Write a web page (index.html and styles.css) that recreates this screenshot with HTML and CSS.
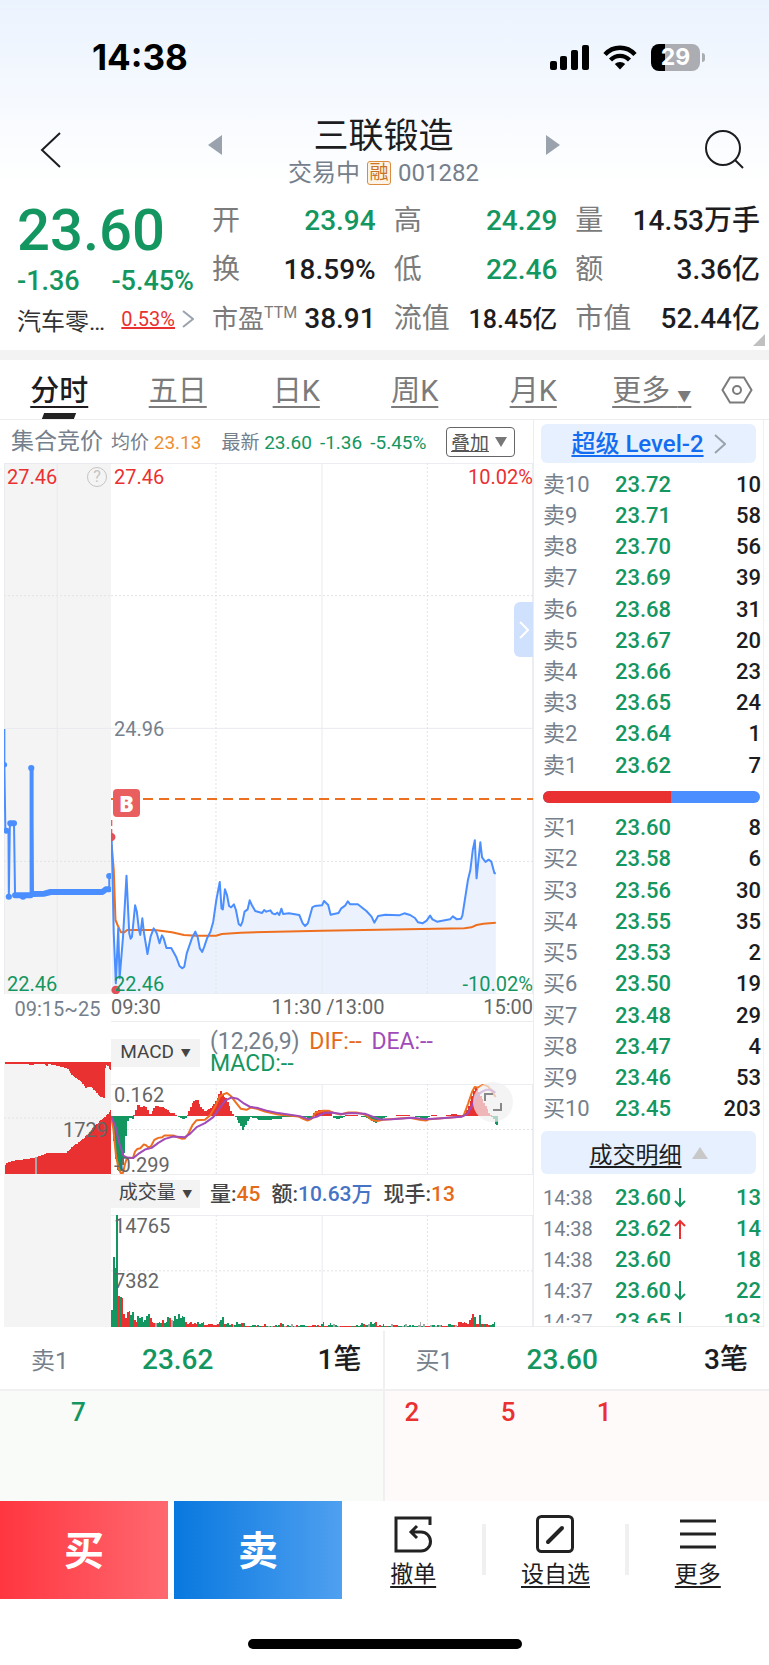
FILE: index.html
```html
<!DOCTYPE html>
<html lang="zh-CN">
<head>
  <meta charset="UTF-8">
  <meta name="viewport" content="width=device-width, initial-scale=1.0">
  <title>三联锻造 001282</title>
  <link rel="stylesheet" href="styles.css">
</head>
<body>
  <!-- Status bar and title -->
  <header class="top">
    <div class="status-bar">
      <span class="clock">14:38</span>
      <div class="status-icons">
        <svg width="39" height="26" viewBox="0 0 39 26">
          <rect x="0" y="17" width="7" height="9" rx="2"/>
          <rect x="10" y="12" width="7" height="14" rx="2"/>
          <rect x="21" y="6" width="7" height="20" rx="2"/>
          <rect x="32" y="1" width="7" height="25" rx="2"/>
        </svg>
        <svg width="34" height="26" viewBox="0 0 34 26" fill="none" stroke="#000" stroke-width="4.4">
          <path d="M2 10.500C10 1.500 24 1.500 32 10.500"/>
          <path d="M7.500 16C13 10.500 21 10.500 26.500 16"/>
          <path d="M17 25.500L11.800 20C14.500 17.300 19.500 17.300 22.200 20Z" fill="#000" stroke="none"/>
        </svg>
        <div class="battery"><span>29</span></div>
      </div>
    </div>
    <nav class="title-bar">
      <button class="icon-button back" aria-label="返回">
        <svg width="22" height="38" viewBox="0 0 22 38"><path d="M20 2L2 19L20 36"/></svg>
      </button>
      <div class="switcher">
        <button class="icon-button arrow" aria-label="上一只">
          <svg width="14" height="20" viewBox="0 0 14 20"><path d="M14 0V20L0 10Z"/></svg>
        </button>
        <div class="title">
          <h1>三联锻造</h1>
          <p>交易中 <span class="tag">融</span> 001282</p>
        </div>
        <button class="icon-button arrow" aria-label="下一只">
          <svg width="14" height="20" viewBox="0 0 14 20"><path d="M0 0V20L14 10Z"/></svg>
        </button>
      </div>
      <button class="icon-button search" aria-label="搜索">
        <svg width="40" height="40" viewBox="0 0 40 40"><circle cx="18" cy="18" r="17"/><path d="M30 30L38 38"/></svg>
      </button>
    </nav>
  </header>

  <!-- Quote -->
  <section class="quote">
    <div class="quote-main">
      <div class="price">23.60</div>
      <div class="change"><span>-1.36</span><span>-5.45%</span></div>
      <div class="sector">
        <span>汽车零…</span>
        <a href="#">0.53%</a>
        <svg width="12" height="18" viewBox="0 0 12 18"><path d="M1 1L11 9L1 17"/></svg>
      </div>
    </div>
    <dl class="stats">
      <div><dt>开</dt><dd class="green">23.94</dd></div>
      <div><dt>换</dt><dd>18.59%</dd></div>
      <div><dt class="small">市盈<sup>TTM</sup></dt><dd>38.91</dd></div>
    </dl>
    <dl class="stats">
      <div><dt>高</dt><dd class="green">24.29</dd></div>
      <div><dt>低</dt><dd class="green">22.46</dd></div>
      <div><dt>流值</dt><dd class="small">18.45亿</dd></div>
    </dl>
    <dl class="stats">
      <div><dt>量</dt><dd>14.53万手</dd></div>
      <div><dt>额</dt><dd>3.36亿</dd></div>
      <div><dt>市值</dt><dd>52.44亿</dd></div>
    </dl>
    <i class="corner"></i>
  </section>

  <!-- Period tabs -->
  <nav class="tabs">
    <a href="#" class="active">分时</a>
    <a href="#">五日</a>
    <a href="#">日K</a>
    <a href="#">周K</a>
    <a href="#">月K</a>
    <a href="#">更多 <small>▼</small></a>
    <button class="icon-button settings" aria-label="设置">
      <svg width="32" height="28" viewBox="0 0 32 28"><path d="M9 1.500H23L30.500 14L23 26.500H9L1.500 14Z"/><circle cx="16" cy="14" r="4"/></svg>
    </button>
  </nav>

  <main class="market">
    <div class="charts">
      <div class="legend">
        <span class="legend-title">集合竞价</span>
        <span>均价 <b class="amber">23.13</b></span>
        <span class="latest">最新 <b class="green">23.60</b></span>
        <b class="green">-1.36</b>
        <b class="green">-5.45%</b>
        <button class="overlay-button"><u>叠加</u><i></i></button>
      </div>

      <!-- Call auction -->
      <div class="auction">
        <div class="panel price-panel grey">
          <svg viewBox="0 0 310 1593" preserveAspectRatio="none">
            <g transform="translate(-13 771)">
              <path class="grid" d="M14 -771V822M167 -771V822M13 -770H323M13 25H323"/>
              <path class="grid dotted" d="M13 -373H323M13 424H323"/>
              <path class="line blue" d="M14 27V134L17 330L26 334L27 530L30 310H42L45 526H92V144L97 523L140 520L148 516H300L310 508H318V468H323"/>
              <path class="line blue thick" d="M30 310H42M45 526H88L100 522H135L148 516H300L308 508H318M93 146V520"/>
              <path class="line blue fat" d="M45 526H90M97 522L130 521L148 516H298L308 508H316M31 310H42"/>
              <g class="blue-dots">
                <circle cx="14" cy="134" r="8"/><circle cx="20" cy="332" r="9"/><circle cx="27" cy="530" r="9"/>
                <circle cx="92" cy="144" r="9"/><circle cx="318" cy="468" r="9"/><circle cx="68" cy="530" r="9"/>
              </g>
            </g>
          </svg>
          <span class="label top-left red">27.46</span>
          <span class="label bottom-left green">22.46</span>
          <span class="help">?</span>
        </div>
        <div class="auction-time">09:15~25</div>
        <div class="panel auction-volume grey">
          <svg viewBox="13 157 310 336" preserveAspectRatio="none">
            <path class="grid dotted" d="M13 325H323"/>
            <g id="auction-bars"></g>
          </svg>
          <span class="label volume-mark">1729</span>
        </div>
        <div class="auction-rest grey"></div>
      </div>

      <!-- Trading session -->
      <div class="session">
        <div class="panel price-panel">
          <svg viewBox="0 0 1226 1593" preserveAspectRatio="none">
            <g transform="translate(-323 771)">
              <path class="area" d="M325 380L337 805L344 625L348 790L358 650L368 467L376 640L380 656L384 650L393 556L398 575L404 628L408 645L414 595L419 640L429 702L438 650L447 625L456 640L464 670L471 646L476 655L484 684H498L512 710L522 738L530 745L536 740L543 700L558 655L568 635L575 652L581 685L588 696L594 680L602 655L612 635L620 605L629 540L639 486L644 565L648 568L654 508L660 525L666 558L672 562L680 553L686 570L694 612L700 617L705 605L711 575L720 568L726 541L732 555L742 573L762 579L768 570L774 575L786 571L792 580L800 583L806 578L812 585L818 566L823 582L840 580L870 585L880 610L887 618L895 610L908 562L915 558L936 556L942 543L954 555L961 584L984 579L992 565L1004 556L1011 544L1018 553L1040 553L1065 573L1080 590L1088 608L1099 588L1120 584L1160 586L1175 580L1192 585L1206 594L1215 607L1228 610L1240 602L1250 587L1257 598L1270 605L1308 598L1316 589L1328 598L1340 596L1344 586L1360 480L1367 450L1374 390L1380 361L1385 475L1396 367L1401 412L1411 426L1420 419L1428 425L1437 460H1441V822H325Z"/>
              <path class="grid" d="M323 -770H1549M323 25H1549M323 822H1549M936 -771V822M1548 -771V822"/>
              <path class="grid dotted" d="M323 -373H1549M323 424H1549M628 -771V822M1242 -771V822"/>
              <path class="line orange" d="M325 375L331 450L336 600L342 615L352 637H362L370 630H450L500 637L535 645L570 647H628L645 642L700 638L936 632L1100 629L1350 625L1370 622L1385 615L1405 611L1441 608"/>
              <path class="line blue" d="M325 360L331 640L337 790L344 625L348 775L358 650L368 467L376 640L380 656L384 650L393 556L398 575L404 628L408 645L414 595L419 640L429 702L438 650L447 625L456 640L464 670L471 646L476 655L484 684H498L512 710L522 738L530 745L536 740L543 700L558 655L568 635L575 652L581 685L588 696L594 680L602 655L612 635L620 605L629 540L639 486L644 565L648 568L654 508L660 525L666 558L672 562L680 553L686 570L694 612L700 617L705 605L711 575L720 568L726 541L732 555L742 573L762 579L768 570L774 575L786 571L792 580L800 583L806 578L812 585L818 566L823 582L840 580L870 585L880 610L887 618L895 610L908 562L915 558L936 556L942 543L954 555L961 584L984 579L992 565L1004 556L1011 544L1018 553L1040 553L1065 573L1080 590L1088 608L1099 588L1120 584L1160 586L1175 580L1192 585L1206 594L1215 607L1228 610L1240 602L1250 587L1257 598L1270 605L1308 598L1316 589L1328 598L1340 596L1344 586L1360 480L1367 450L1374 390L1380 361L1385 475L1396 367L1401 412L1411 426L1420 419L1428 425L1437 460H1441"/>
              <path class="line orange cost" d="M323 237H1549"/>
              <path class="line trade" d="M324 300V345"/>
              <circle class="trade-dot" cx="323" cy="351" r="13"/>
              <circle class="trade-dot" cx="337" cy="810" r="13"/>
            </g>
          </svg>
          <span class="label top-left red">27.46</span>
          <span class="label top-right red">10.02%</span>
          <span class="label middle-left">24.96</span>
          <span class="label bottom-left green">22.46</span>
          <span class="label bottom-right green">-10.02%</span>
          <span class="buy-mark">B</span>
          <button class="icon-button drawer" aria-label="展开">
            <svg width="10" height="18" viewBox="0 0 10 18"><path d="M1 1L9 9L1 17"/></svg>
          </button>
        </div>
        <div class="time-axis"><span>09:30</span><span class="noon">11:30 /13:00</span><span>15:00</span></div>

        <div class="indicator macd-head">
          <button class="picker">MACD <small>▼</small></button>
          <p class="macd-values"><span>(12,26,9)</span> <span class="orange-text">DIF:--</span> <span class="purple">DEA:--</span> <span class="green">MACD:--</span></p>
        </div>
        <div class="panel macd-panel">
          <svg viewBox="18 26 1267 272" preserveAspectRatio="none">
            <path class="grid" d="M18 27H1285M18 297H1285M652 26V298M1284 26V298"/>
            <path class="grid dotted" d="M18 162H1285M334 26V298M968 26V298"/>
            <g id="macd-bars"></g>
            <path class="line orange" d="M18 122L25 160L33 240L40 275L47 292H54L60 265L66 247H84L90 228L97 220L106 218L116 207L122 208L130 216L138 212L148 193L160 187L172 185L178 180H205L218 185L232 190L240 189L250 175L262 150L275 134L300 133L315 120L330 95L345 63L355 57L366 53L378 62L392 80L408 100L425 103L438 96L452 99L480 108L520 117L580 123L595 130L608 135L620 130L632 112L655 106H670L690 113L707 117L730 111H755L780 117L800 133L817 137L835 133L915 127L945 133L963 135L975 131L1065 124L1077 120L1090 85L1102 50L1110 35L1120 37L1135 28L1150 33L1163 50L1173 65"/>
            <path class="line violet" d="M18 122L32 155L42 200L55 240L66 246L85 247L100 235L120 222L140 217L160 202L180 190L205 183L240 185L255 175L275 155L300 143L325 125L345 97L362 75L380 66L398 70L418 85L435 94L460 98L490 107L520 113L585 122L610 131L635 124L660 112L680 111L710 116L740 113L780 115L800 122L825 132L860 131L925 127L960 131L1000 129L1070 124L1088 115L1100 95L1115 65L1130 50L1145 43H1160L1172 52"/>
          </svg>
          <span class="label top-left dark">0.162</span>
          <span class="label bottom-left dark">-0.299</span>
          <button class="icon-button expand" aria-label="全屏">
            <svg width="18" height="18" viewBox="0 0 18 18"><path d="M1 8V1H9M17 10V17H9"/></svg>
          </button>
        </div>

        <div class="indicator volume-head">
          <button class="picker">成交量 <small>▼</small></button>
          <p class="volume-values"><span>量:<b class="orange-text">45</b></span><span>额:<b class="blue-text">10.63万</b></span><span>现手:<b class="orange-text">13</b></span></p>
        </div>
        <div class="panel volume-panel">
          <svg viewBox="18 15 1267 335" preserveAspectRatio="none">
            <path class="grid" d="M18 16H1285M18 349H1285M652 15V350M1284 15V350"/>
            <path class="grid dotted" d="M18 182H1285M334 15V350M968 15V350"/>
            <g id="volume-bars"></g>
          </svg>
          <span class="label top-left dark">14765</span>
          <span class="label half-left dark">7382</span>
        </div>
      </div>
    </div>

    <!-- Order book -->
    <aside class="book">
      <a href="#" class="level2"><u>超级 Level-2</u><svg width="12" height="20" viewBox="0 0 12 20"><path d="M1 1L11 10L1 19"/></svg></a>
      <table class="depth">
        <tr><th>卖10</th><td>23.72</td><td>10</td></tr>
        <tr><th>卖9</th><td>23.71</td><td>58</td></tr>
        <tr><th>卖8</th><td>23.70</td><td>56</td></tr>
        <tr><th>卖7</th><td>23.69</td><td>39</td></tr>
        <tr><th>卖6</th><td>23.68</td><td>31</td></tr>
        <tr><th>卖5</th><td>23.67</td><td>20</td></tr>
        <tr><th>卖4</th><td>23.66</td><td>23</td></tr>
        <tr><th>卖3</th><td>23.65</td><td>24</td></tr>
        <tr><th>卖2</th><td>23.64</td><td>1</td></tr>
        <tr><th>卖1</th><td>23.62</td><td>7</td></tr>
        <tr><td colspan="3" class="ratio-cell"><div class="ratio"><i style="width: 59%"></i></div></td></tr>
        <tr><th>买1</th><td>23.60</td><td>8</td></tr>
        <tr><th>买2</th><td>23.58</td><td>6</td></tr>
        <tr><th>买3</th><td>23.56</td><td>30</td></tr>
        <tr><th>买4</th><td>23.55</td><td>35</td></tr>
        <tr><th>买5</th><td>23.53</td><td>2</td></tr>
        <tr><th>买6</th><td>23.50</td><td>19</td></tr>
        <tr><th>买7</th><td>23.48</td><td>29</td></tr>
        <tr><th>买8</th><td>23.47</td><td>4</td></tr>
        <tr><th>买9</th><td>23.46</td><td>53</td></tr>
        <tr><th>买10</th><td>23.45</td><td>203</td></tr>
      </table>
      <button class="details-button"><u>成交明细</u><i></i></button>
      <div class="trades">
        <table>
          <tr><th>14:38</th><td>23.60<svg class="tick" viewBox="0 0 12 20"><path d="M6 0V18M1 13L6 18L11 13"/></svg></td><td>13</td></tr>
          <tr><th>14:38</th><td>23.62<svg class="tick up" viewBox="0 0 12 20"><path d="M6 20V2M1 7L6 2L11 7"/></svg></td><td>14</td></tr>
          <tr><th>14:38</th><td>23.60</td><td>18</td></tr>
          <tr><th>14:37</th><td>23.60<svg class="tick" viewBox="0 0 12 20"><path d="M6 0V18M1 13L6 18L11 13"/></svg></td><td>22</td></tr>
          <tr><th>14:37</th><td>23.65<svg class="tick" viewBox="0 0 12 20"><path d="M6 0V18M1 13L6 18L11 13"/></svg></td><td>193</td></tr>
        </table>
      </div>
    </aside>
  </main>

  <!-- Best bid and ask queues -->
  <section class="queues">
    <div class="queue sell">
      <div class="queue-head"><span>卖1</span><b class="green">23.62</b><strong>1笔</strong></div>
      <div class="queue-body"><span>7</span></div>
    </div>
    <div class="queue buy">
      <div class="queue-head"><span>买1</span><b class="green">23.60</b><strong>3笔</strong></div>
      <div class="queue-body"><span>2</span><span>5</span><span>1</span></div>
    </div>
  </section>

  <!-- Trade actions -->
  <footer class="actions">
    <button class="trade-button buy-button">买</button>
    <button class="trade-button sell-button">卖</button>
    <div class="tools">
      <a href="#">
        <svg width="38" height="38" viewBox="0 0 38 38"><path d="M36 10V3H2V36H27A9.500 9.500 0 0 0 27 17H17M23 11L17 17L23 23"/></svg>
        撤单
      </a>
      <a href="#">
        <svg width="38" height="38" viewBox="0 0 38 38"><rect x="1.500" y="1.500" width="35" height="35" rx="4"/><path d="M12 27L26 13" stroke-width="4" stroke-linecap="round"/></svg>
        设自选
      </a>
      <a href="#">
        <svg width="38" height="38" viewBox="0 0 38 38"><path d="M1 6H37M1 19H37M1 32H37"/></svg>
        更多
      </a>
    </div>
  </footer>
  <div class="home-indicator"></div>

  <script src="charts.js"></script>
</body>
</html>
```

FILE: styles.css
```css
/* General */
* {
  box-sizing: border-box;
}

body {
  margin: 0;
  background: #fff;
  color: #1d1d1f;
  font-family: Roboto, "Noto Sans CJK SC", sans-serif;
}

h1, p, dl, dd {
  margin: 0;
}

button {
  border: none;
  padding: 0;
  font-family: inherit;
  cursor: pointer;
}

a {
  color: inherit;
}

b {
  font-weight: inherit;
}

svg {
  display: block;
}

table {
  width: 100%;
  border-collapse: collapse;
}

.icon-button {
  display: flex;
  align-items: center;
  justify-content: center;
  background: none;
}

.green { color: #149660; }
.red { color: #ea3131; }
.amber { color: #ee8f2f; }
.orange-text { color: #e56a17; }
.purple { color: #a04bb8; }
.blue-text { color: #4773c5; }
.grey { background: #f4f4f4; }

/* Status bar and title */
.top {
  background: linear-gradient(#ebf3fe, #fff);
}

.status-bar {
  display: flex;
  align-items: center;
  justify-content: space-between;
  height: 114px;
  padding: 0 69px 0 92px;
}

.clock {
  color: #000;
  font-family: Inter, sans-serif;
  font-size: 35px;
  font-weight: 700;
}

.status-icons {
  display: flex;
  align-items: center;
  gap: 14px;
}

.battery {
  position: relative;
  width: 49px;
  height: 27px;
  border-radius: 8px;
  background: linear-gradient(90deg, #000 29%, #abadb2 29%);
  color: #fff;
  font: 700 23px/27px Inter, sans-serif;
  text-align: center;
}

.battery::after {
  content: "";
  position: absolute;
  left: 51px;
  top: 9px;
  width: 3px;
  height: 9px;
  border-radius: 0 3px 3px 0;
  background: #abadb2;
}

.title-bar {
  display: flex;
  align-items: center;
  justify-content: space-between;
  height: 72px;
  padding: 0 24px 0 40px;
}

.title-bar svg {
  fill: none;
  stroke: #1d1d1f;
  stroke-width: 2;
}

.title-bar .arrow {
  padding-bottom: 10px;
}

.title-bar .arrow svg {
  fill: #9aa3ad;
  stroke: none;
}

.switcher {
  display: flex;
  align-items: center;
  justify-content: space-between;
  width: 352px;
}

.title {
  text-align: center;
}

.title h1 {
  padding-top: 2px;
  font-size: 35px;
  font-weight: 400;
  line-height: 44px;
}

.title p {
  display: flex;
  align-items: center;
  gap: 7px;
  color: #75808c;
  font-size: 24px;
  line-height: 28px;
}

.tag {
  width: 24px;
  height: 24px;
  border: 1px solid #dd8b3c;
  border-radius: 3px;
  background: #fdf3e6;
  color: #c97422;
  font-size: 19px;
  line-height: 22px;
  text-align: center;
}

/* Quote */
.quote {
  position: relative;
  display: grid;
  grid-template-columns: 177px 164fr 164fr 185fr;
  padding: 12px 9px 5px 17px;
  column-gap: 18px;
  border-bottom: 10px solid #f3f3f3;
}

.quote-main {
  color: #149660;
}

.price {
  font-size: 58px;
  font-weight: 500;
  line-height: 64px;
}

.change {
  display: flex;
  justify-content: space-between;
  font-size: 27px;
  font-weight: 500;
  line-height: 38px;
}

.sector {
  display: flex;
  align-items: center;
  justify-content: space-between;
  height: 38px;
  color: #333;
  font-size: 24px;
}

.sector a {
  margin-left: auto;
  margin-right: 7px;
  color: #ea3131;
  font-size: 20px;
}

.sector svg {
  fill: none;
  stroke: #9aa3ad;
  stroke-width: 2;
}

.stats div {
  display: flex;
  align-items: baseline;
  justify-content: space-between;
  height: 49px;
  font-size: 28px;
  line-height: 46px;
  white-space: nowrap;
}

.stats dt {
  color: #7b7b7b;
}

.stats dt.small {
  font-size: 26px;
}

.stats dd {
  font-weight: 500;
}

.stats dd.small {
  font-size: 25px;
}

.stats sup {
  font-size: 16px;
  line-height: 0;
}

.corner {
  position: absolute;
  right: 4px;
  bottom: 4px;
  border: 6px solid #c0c0c0;
  border-top-color: transparent;
  border-left-color: transparent;
}

/* Tabs */
.tabs {
  display: flex;
  height: 60px;
  border-bottom: 1px solid #ededed;
  color: #7b7b7b;
  font-size: 29px;
}

.tabs a {
  position: relative;
  flex: 1;
  line-height: 62px;
  text-align: center;
  text-decoration-thickness: 2px;
  text-underline-offset: 5px;
}

.tabs small {
  font-size: 14px;
}

.tabs .active {
  color: #1d1d1f;
  font-weight: 500;
}

.tabs .active::after {
  content: "";
  position: absolute;
  left: 50%;
  bottom: 0;
  width: 32px;
  height: 6px;
  margin-left: -16px;
  background: #222;
  transform: skewX(-20deg);
}

.settings {
  width: 58px;
  padding-right: 6px;
}

.settings svg {
  fill: none;
  stroke: #7b7b7b;
  stroke-width: 2;
}

/* Charts */
.market {
  display: grid;
  grid-template-columns: minmax(0, 1fr) 230px;
  padding: 0 5px 4px 4px;
}

.charts {
  display: grid;
  grid-template-columns: 107px minmax(0, 1fr);
  grid-template-rows: 43px auto;
  border-right: 1px solid #ededed;
}

.legend {
  grid-column: 1 / 3;
  display: flex;
  align-items: baseline;
  gap: 8px;
  padding-left: 7px;
  color: #75808c;
  font-size: 19px;
  line-height: 43px;
  white-space: nowrap;
}

.legend-title {
  font-size: 23px;
}

.latest {
  margin-left: 12px;
}

.overlay-button {
  display: flex;
  align-items: center;
  align-self: center;
  gap: 6px;
  height: 30px;
  margin-left: auto;
  margin-right: 18px;
  padding: 0 7px 0 4px;
  border: 1px solid #666;
  border-radius: 4px;
  background: #fff;
  color: #555;
  font-size: 19px;
}

.overlay-button i {
  border: 6px solid transparent;
  border-top: 10px solid #777;
  border-bottom: none;
}

.auction,
.session {
  display: flex;
  flex-direction: column;
}

.panel {
  position: relative;
}

.panel > svg {
  width: 100%;
  height: 100%;
}

.price-panel { height: 531px; }
.auction-volume { height: 112px; }
.macd-panel { height: 91px; }
.volume-panel { height: 112px; }

.auction-time {
  height: 68px;
  color: #75808c;
  font-size: 20px;
  line-height: 30px;
  text-align: center;
}

.auction-rest {
  flex: 1;
}

.grid {
  fill: none;
  stroke: #e9eaee;
  vector-effect: non-scaling-stroke;
}

.dotted {
  stroke: #e2e3e6;
  stroke-dasharray: 2 2;
}

.line {
  fill: none;
  stroke-width: 2;
  stroke-linejoin: round;
  vector-effect: non-scaling-stroke;
}

.blue { stroke: #4a8eff; }
.orange { stroke: #ee6f1f; }
.violet { stroke: #a04bb8; }
.thick { stroke-width: 4; }
.fat { stroke-width: 6; stroke-linecap: round; }
.blue-dots { fill: #4a8eff; }
.area { fill: #ebf2fe; }
.cost { stroke-dasharray: 10 6; }
.trade { stroke: #e95f60; stroke-dasharray: 6 3; }
.trade-dot { fill: #e2505a; }

#auction-bars,
#macd-bars,
#volume-bars {
  shape-rendering: crispEdges;
}

.label {
  position: absolute;
  color: #75808c;
  font-size: 20px;
  line-height: 24px;
}

.label.red { color: #ea3131; }
.label.green { color: #149660; }
.top-left { top: 2px; left: 3px; }
.top-right { top: 2px; right: 0; }
.middle-left { top: 254px; left: 3px; }
.half-left { top: 54px; left: 3px; }
.bottom-left { bottom: -2px; left: 3px; }
.bottom-right { bottom: -2px; right: 0; }
.volume-mark { top: 56px; right: 3px; color: #666; }
.dark { color: #666; }
.top-left.dark { top: -1px; }

.help {
  position: absolute;
  top: 4px;
  right: 4px;
  width: 20px;
  height: 20px;
  border: 1px solid #c4c4c4;
  border-radius: 50%;
  color: #c4c4c4;
  font-size: 16px;
  line-height: 18px;
  text-align: center;
}

.buy-mark {
  position: absolute;
  top: 326px;
  left: 2px;
  width: 27px;
  height: 28px;
  border-radius: 4px;
  background: #e95f60;
  color: #fff;
  font: 800 22px/29px "Open Sans", sans-serif;
  text-align: center;
}

.drawer {
  position: absolute;
  top: 139px;
  right: 0;
  width: 19px;
  height: 55px;
  border-radius: 6px 0 0 6px;
  background: #d0e1fd;
}

.drawer svg {
  fill: none;
  stroke: #fff;
  stroke-width: 2;
}

.time-axis {
  display: flex;
  justify-content: space-between;
  height: 27px;
  color: #666;
  font-size: 20px;
  line-height: 26px;
}

.noon {
  padding-left: 12px;
}

.indicator {
  display: flex;
  align-items: center;
  gap: 10px;
}

.picker {
  width: 89px;
  height: 28px;
  background: #f3f3f3;
  color: #444;
  font-size: 19px;
  line-height: 26px;
  white-space: nowrap;
}

.picker small {
  margin-left: 2px;
  font-size: 10px;
  vertical-align: 1px;
}

.macd-head {
  height: 63px;
  border-top: 1px solid #ededed;
}

.macd-values {
  width: 260px;
  color: #75808c;
  font-size: 23px;
  line-height: 22px;
}

.macd-values span {
  margin-right: 4px;
}

.volume-head {
  height: 40px;
  padding-bottom: 2px;
}

.volume-values {
  display: flex;
  gap: 11px;
  color: #444;
  font-size: 21px;
  font-weight: 500;
  line-height: 28px;
}

.expand {
  position: absolute;
  top: -2px;
  right: 20px;
  width: 40px;
  height: 40px;
  border-radius: 50%;
  background: rgba(240, 240, 240, 0.7);
}

.expand svg {
  fill: none;
  stroke: #888;
  stroke-width: 2;
}

/* Order book */
.book {
  display: flex;
  flex-direction: column;
  padding-top: 4px;
  border-right: 1px solid #f1f1f1;
  border-bottom: 1px solid #ededed;
}

.level2,
.details-button {
  display: flex;
  align-items: center;
  justify-content: center;
  gap: 10px;
  margin: 0 7px;
  border-radius: 6px;
  background: #e6f0fe;
}

.level2 {
  height: 39px;
  color: #146cf0;
  font-size: 24px;
  font-weight: 500;
  line-height: 36px;
  text-decoration: none;
}

.level2 u,
.details-button u {
  text-decoration-thickness: 2px;
  text-underline-offset: 3px;
}

.level2 svg {
  fill: none;
  stroke: #9aa3ad;
  stroke-width: 2;
}

.depth {
  height: 656px;
  margin: 6px 0 2px;
}

.book tr {
  height: 31px;
}

.book th,
.book td {
  padding: 0;
  color: #149660;
  font-size: 22px;
  font-weight: 500;
  line-height: 24px;
  text-align: left;
  white-space: nowrap;
}

.book th {
  width: 81px;
  padding-left: 9px;
  color: #75808c;
  font-weight: 400;
}

.book td:last-child {
  padding-right: 2px;
  text-align: right;
}

.depth td:last-child {
  color: #1d1d1f;
}

.book .depth .ratio-cell {
  padding: 0 3px 0 9px;
}

.ratio {
  height: 12px;
  border-radius: 6px;
  background: #4a8eff;
  overflow: hidden;
}

.ratio i {
  display: block;
  height: 100%;
  background: #ea3131;
}

.details-button {
  height: 43px;
  margin-top: 4px;
  color: #1d1d1f;
  font-size: 23px;
}

.details-button i {
  border: 8px solid transparent;
  border-top: none;
  border-bottom: 12px solid #c8c8c8;
}

.trades {
  height: 141px;
  margin: 8px 0 3px;
  overflow: hidden;
}

.book .trades th {
  font-size: 20px;
}

.tick {
  display: inline-block;
  width: 12px;
  height: 20px;
  margin-left: 3px;
  vertical-align: -3px;
  fill: none;
  stroke: #149660;
  stroke-width: 2;
}

.tick.up {
  stroke: #ea3131;
}

/* Queues */
.queues {
  display: grid;
  grid-template-columns: 1fr 1fr;
}

.queue.sell {
  border-right: 2px solid #f0f0f0;
}

.queue-head {
  display: grid;
  grid-template-columns: 111px 1fr auto;
  align-items: baseline;
  height: 60px;
  padding: 0 21px 0 31px;
  border-bottom: 2px solid #f0f0f0;
  font-size: 28px;
  font-weight: 500;
  line-height: 58px;
}

.queue-head span {
  color: #75808c;
  font-size: 24px;
  font-weight: 400;
}

.queue-head strong {
  font-weight: 500;
}

.queue-body {
  display: grid;
  grid-template-columns: repeat(4, 1fr);
  height: 110px;
  padding-top: 6px;
  background: #fffafa;
  color: #ea3131;
  font-size: 26px;
  font-weight: 500;
}

.queue-body span {
  padding-left: 20px;
}

.sell .queue-body {
  background: #f9fbf9;
  color: #149660;
}

.sell .queue-body span {
  padding-left: 71px;
}

/* Actions */
.actions {
  display: flex;
  height: 98px;
}

.trade-button {
  flex: 0 0 168px;
  padding-bottom: 4px;
  color: #fff;
  font-size: 40px;
  font-weight: 700;
}

.buy-button {
  background: linear-gradient(90deg, #ff3640, #ff6870);
}

.sell-button {
  margin-left: 6px;
  background: linear-gradient(90deg, #0878df, #4fa0f0);
}

.tools {
  flex: 1;
  display: flex;
}

.tools a {
  position: relative;
  flex: 1;
  display: flex;
  flex-direction: column;
  align-items: center;
  gap: 4px;
  padding-top: 14px;
  font-size: 23px;
  line-height: 36px;
  text-decoration-thickness: 2px;
  text-underline-offset: 4px;
}

.tools a + a::before {
  content: "";
  position: absolute;
  left: -2px;
  top: 23px;
  width: 4px;
  height: 51px;
  background: #f0f0f0;
}

.tools svg {
  fill: none;
  stroke: #222;
  stroke-width: 3;
}

.home-indicator {
  width: 274px;
  height: 10px;
  margin: 40px auto 16px;
  border-radius: 5px;
  background: #000;
}
```

FILE: charts.js
```js
const RED = '#ea3131';
const GREEN = '#149660';
const GREY = '#a9a9a9';

// Add one bar to a chart group
function addBar(group, x, y, width, height, color) {
  const rect = document.createElementNS('http://www.w3.org/2000/svg', 'rect');
  rect.setAttribute('x', x);
  rect.setAttribute('y', y);
  rect.setAttribute('width', width);
  rect.setAttribute('height', height);
  rect.setAttribute('fill', color);
  group.appendChild(rect);
}

// Value of a list of [x, value] points at x
function valueAt(points, x) {
  for (let i = 1; i < points.length; i++) {
    if (x <= points[i][0]) {
      const [x0, v0] = points[i - 1];
      const [x1, v1] = points[i];
      return v0 + (v1 - v0) * (x - x0) / (x1 - x0);
    }
  }
  return 0;
}

// Call auction: unmatched volume hangs from the top, matched volume stands below
const unmatched = [[13, 6], [80, 6], [90, 11], [100, 6], [130, 6], [135, 14], [140, 6], [178, 14], [195, 20], [205, 35], [215, 45], [235, 60], [248, 77], [262, 75], [270, 80], [285, 100], [300, 108], [302, 20], [309, 8], [316, 20], [323, 25]];
const matched = [[13, 26], [25, 36], [40, 40], [75, 45], [105, 50], [135, 62], [190, 62], [210, 82], [225, 92], [240, 105], [255, 120], [270, 140], [285, 155], [300, 168], [310, 178], [323, 196]];
const auction = document.getElementById('auction-bars');
for (let x = 16; x < 323; x += 4) {
  addBar(auction, x, 157, 5, valueAt(unmatched, x), x < 20 ? GREEN : RED);
  const h = valueAt(matched, x);
  addBar(auction, x, 493 - h, 5, h, x < 20 ? GREEN : x === 104 ? GREY : RED);
}

// MACD histogram
const macd = [[18, 0], [20, -20], [27, -95], [33, -160], [45, -165], [52, -140], [58, -80], [64, -15], [70, -5], [80, -8], [84, 0], [88, 10], [96, 38], [102, 30], [108, 25], [118, 32], [124, 20], [130, 5], [136, 5], [142, 20], [150, 30], [165, 28], [180, 22], [190, 12], [205, 8], [215, 0], [225, -5], [232, -9], [240, -5], [244, 0], [250, 15], [260, 40], [273, 52], [283, 30], [295, 15], [310, 20], [325, 35], [335, 55], [345, 76], [352, 60], [360, 55], [368, 35], [378, 8], [384, 0], [392, -5], [400, -22], [410, -40], [418, -30], [425, -15], [435, -4], [450, -7], [465, -12], [500, -10], [525, -9], [530, -4], [600, -3], [605, -8], [618, -4], [622, 5], [630, 15], [645, 18], [670, 18], [678, 5], [684, -5], [700, -9], [715, -2], [720, 2], [750, 3], [765, 0], [785, -5], [810, -20], [830, -8], [845, 0], [900, 4], [920, 0], [940, -4], [960, -10], [970, -3], [978, 3], [1010, 0], [1045, 6], [1060, 3], [1078, 5], [1090, 30], [1100, 60], [1110, 88], [1118, 75], [1130, 50], [1140, 30], [1150, 10], [1158, 0], [1165, -10], [1172, -28], [1178, -28]];
const macdBars = document.getElementById('macd-bars');
for (let x = 20; x < 1176; x += 5) {
  const v = valueAt(macd, x);
  addBar(macdBars, x, v > 0 ? 122 - v : 122, 6, Math.abs(v), v > 0 ? RED : GREEN);
}

// Volume per minute: g = down, r = up, n = flat
const volume = 'g50 g208 g176 g335 r92 g90 r88 r40 r27 r44 g47 g36 g44 r22 r14 g32 g26 g30 r14 g20 g32 g40 r28 r16 r12 n12 g12 g16 g12 r20 g12 g14 g30 r26 n22 g18 g32 g24 g40 g26 g32 g30 r16 r10 r12 r14 r8 r12 r10 g14 g8 g12 g15 r6 r6 r8 r8 r9 r7 r6 r8 r14 g22 g30 r8 g8 g12 g7 r8 n6 g5 g14 g8 g10 r13 g11 r4 r4 r4 g2 g7 g5 r4 g5 g4 r4 g4 r8 g3 n3 g4 n3 r3 g5 g3 g7 r12 g8 n3 r3 g5 g2 n10 g4 n3 r5 g4 g7 g5 g6 g4 r3 r4 r4 r5 r5 g3 r6 r4 g8 r14 r3 r4 g7 g11 g7 n8 g7 r4 n3 r3 r4 r4 r3 r4 r4 g3 r4 r3 g5 g4 g6 g11 r8 g5 r6 n8 g14 g9 g11 r14 r3 r5 g2 r10 g4 r4 g2 g4 n8 r7 r5 r5 g4 g4 n2 g5 n9 g3 g6 n4 g7 g4 g3 n5 n14 g3 n8 r4 g4 r4 n5 g7 g5 n4 g6 n7 r5 r3 r4 r3 g9 g8 g5 r7 n5 g3 r15 r15 r12 r14 r12 r10 r21 r26 r38 g30 r10 r10 g36 r8 g10 r8 g8 r7 g6 g10 g16'.split(' ');
const step = 1154 / volume.length;
const colors = { r: RED, g: GREEN, n: GREY };
const volumeBars = document.getElementById('volume-bars');
volume.forEach(function (item, i) {
  const h = Number(item.slice(1));
  addBar(volumeBars, 18 + i * step, 350 - h, step, h, colors[item[0]]);
});
```
